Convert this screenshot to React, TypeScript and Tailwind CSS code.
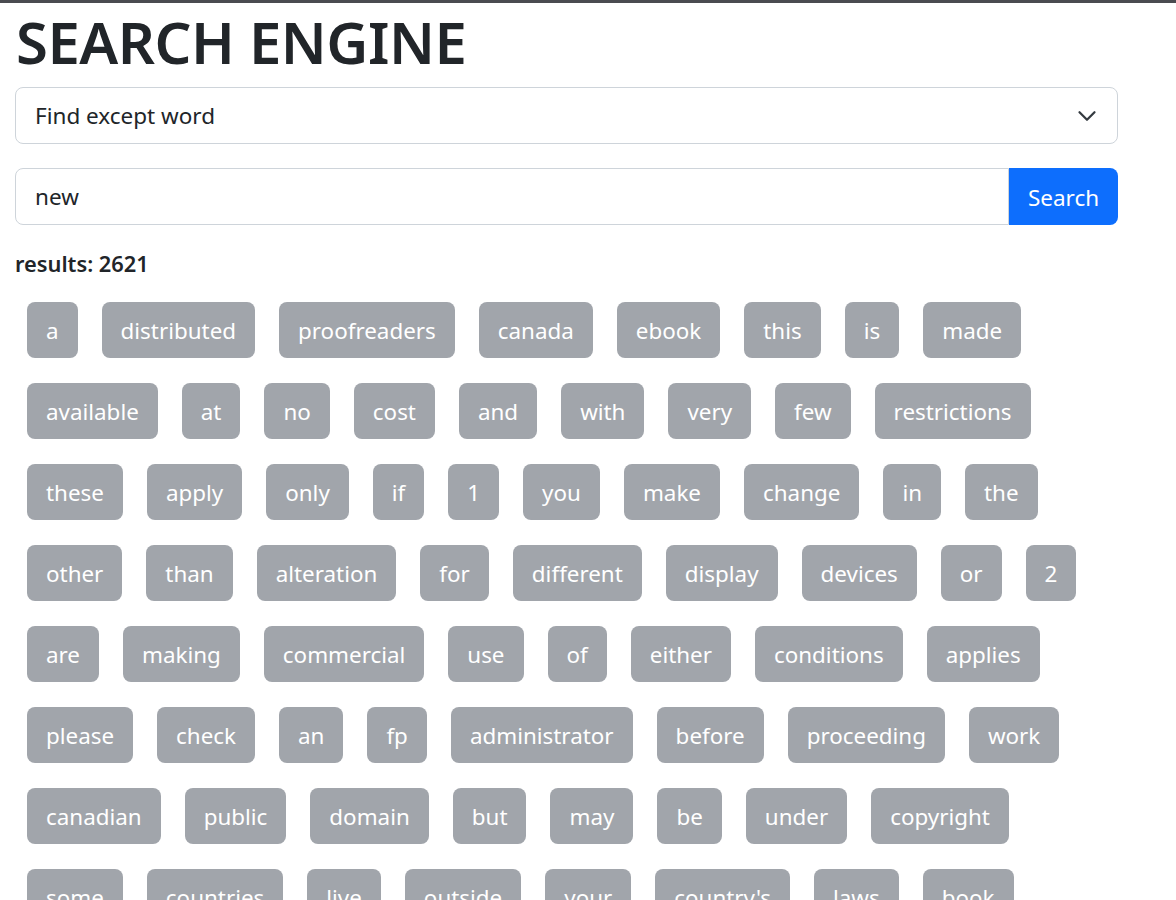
import React from "react";

const rows: string[][] = [
  ["a", "distributed", "proofreaders", "canada", "ebook", "this", "is", "made"],
  ["available", "at", "no", "cost", "and", "with", "very", "few", "restrictions"],
  ["these", "apply", "only", "if", "1", "you", "make", "change", "in", "the"],
  ["other", "than", "alteration", "for", "different", "display", "devices", "or", "2"],
  ["are", "making", "commercial", "use", "of", "either", "conditions", "applies"],
  ["please", "check", "an", "fp", "administrator", "before", "proceeding", "work"],
  ["canadian", "public", "domain", "but", "may", "be", "under", "copyright"],
  ["some", "countries", "live", "outside", "your", "country's", "laws", "book"],
];

export default function App() {
  return (
    <div
      className="h-[900px] bg-white text-[#212529] border-t-[3px] border-[#4a4b50] overflow-hidden"
      style={{ fontFamily: '"Noto Sans", "Open Sans", sans-serif' }}
    >
      <div className="w-[1103px] ml-[15px]">
        <h1 className="text-[58px] leading-[68px] font-semibold mt-[5px] mb-[11px] tracking-[-0.5px] pl-[1px]">
          SEARCH ENGINE
        </h1>
        <div className="h-[57px] border border-[#ced4da] rounded-[8px] flex items-center justify-between pl-[19px] pr-[20px] text-[22.5px]">
          <span className="pt-[1px]">Find except word</span>
          <svg width="20" height="20" viewBox="0 0 16 16" fill="none">
            <path d="m2 5 6 6 6-6" stroke="#343a40" strokeWidth="1.8" strokeLinecap="round" strokeLinejoin="round" />
          </svg>
        </div>
        <div className="mt-[24px] flex h-[57px]">
          <div className="flex-1 border border-[#ced4da] rounded-l-[8px] flex items-center pl-[19px] text-[22.5px] pt-[1px]">
            new
          </div>
          <div className="w-[109px] bg-[#0d6efd] text-white rounded-r-[8px] flex items-center justify-center text-[22.5px] pt-[2px]">
            Search
          </div>
        </div>
        <div className="mt-[24px] text-[21.8px] font-semibold leading-[30px]">results: 2621</div>
        <div className="mt-[23px] ml-[12px] flex flex-col gap-[25px]">
          {rows.map((r, i) => (
            <div key={i} className="flex gap-[24px]">
              {r.map((w, j) => (
                <div
                  key={j}
                  className="h-[56px] px-[19px] pt-[2px] bg-[#a1a5ab] text-white rounded-[8px] flex items-center text-[22.4px] whitespace-nowrap"
                >
                  {w}
                </div>
              ))}
            </div>
          ))}
        </div>
      </div>
    </div>
  );
}
